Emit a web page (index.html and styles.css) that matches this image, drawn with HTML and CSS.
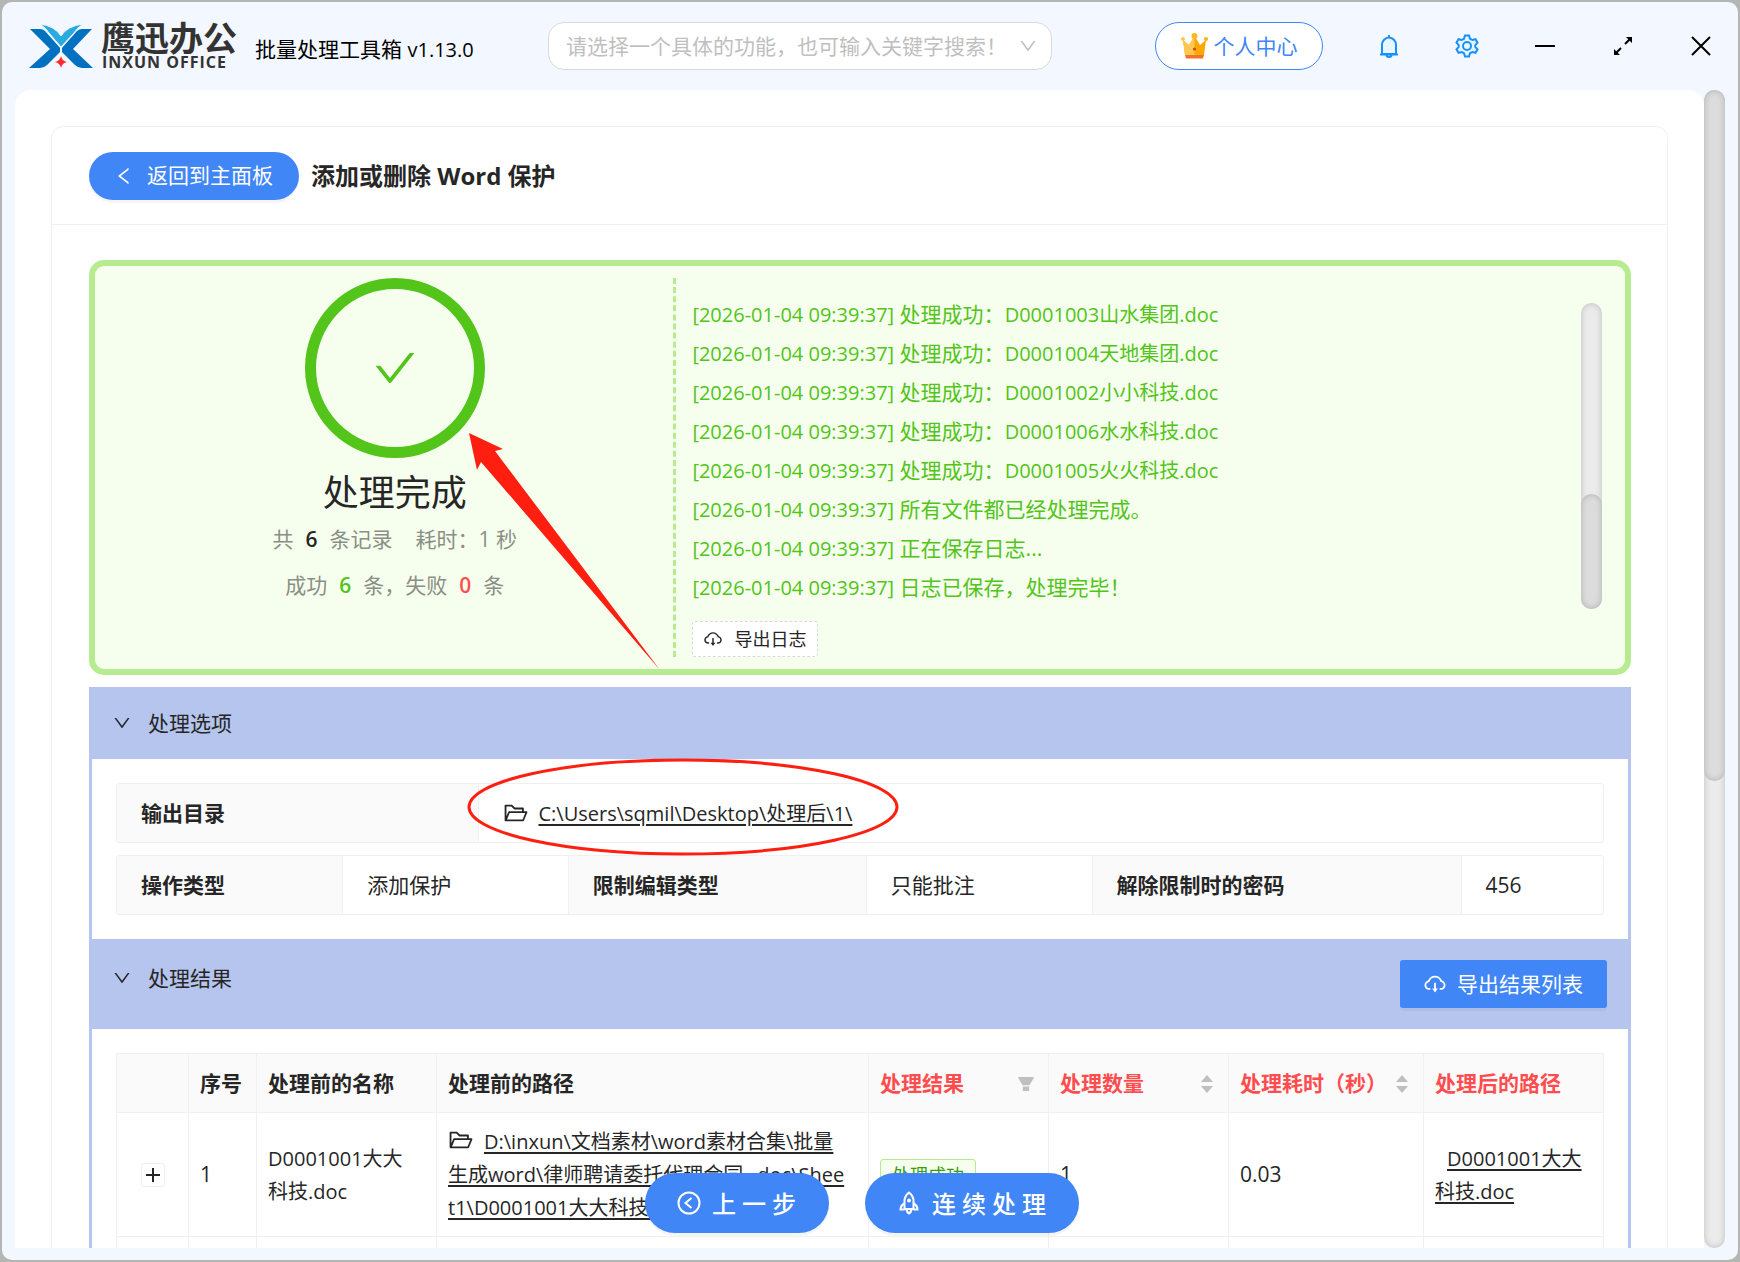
FILE: index.html
```html
<!DOCTYPE html>
<html lang="zh-CN">
<head>
<meta charset="utf-8">
<title>鹰迅办公 批量处理工具箱</title>
<link rel="stylesheet" href="styles.css">
</head>
<body>
<svg class="defs" aria-hidden="true">
  <symbol id="i-down" viewBox="0 0 1024 1024"><path d="M884 256h-75c-5.100 0-9.900 2.500-12.900 6.600L512 654.200 227.900 262.600c-3-4.100-7.800-6.600-12.900-6.600h-75c-6.500 0-10.300 7.400-6.500 12.700l352.600 486.100c12.800 17.600 39 17.600 51.700 0l352.600-486.100c3.900-5.300.1-12.700-6.400-12.700z"/></symbol>
  <symbol id="i-left" viewBox="0 0 1024 1024"><path d="M724 218.300V141c0-6.700-7.700-10.400-12.900-6.300L260.300 486.800a31.860 31.860 0 0 0 0 50.300l450.800 352.100c5.300 4.100 12.900.4 12.900-6.300v-77.300c0-4.900-2.300-9.600-6.100-12.600l-360-281 360-281.100c3.800-3 6.100-7.700 6.100-12.600z"/></symbol>
  <symbol id="i-check" viewBox="0 0 1024 1024"><path d="M912 190h-69.900c-9.800 0-19.100 4.500-25.100 12.200L404.700 724.500 207 474a32 32 0 0 0-25.100-12.200H112c-6.700 0-10.400 7.700-6.300 12.900l273.900 347c12.800 16.200 37.400 16.200 50.300 0l488.400-618.900c4.100-5.100.4-12.800-6.300-12.800z"/></symbol>
  <symbol id="i-cloud" viewBox="0 0 1024 1024"><path d="M624 706.300h-74.100V464c0-4.400-3.600-8-8-8h-60c-4.400 0-8 3.600-8 8v242.300H400c-6.700 0-10.400 7.700-6.300 12.900l112 141.700a8 8 0 0 0 12.600 0l112-141.700c4.100-5.200.4-12.900-6.300-12.900z"/><path d="M811.400 366.700C765.600 245.900 648.900 160 512.200 160S258.800 245.800 213 366.600C127.300 389.100 64 467.200 64 560c0 110.500 89.500 200 199.900 200H304c4.400 0 8-3.600 8-8v-60c0-4.400-3.600-8-8-8h-40.100c-33.700 0-65.400-13.400-89-37.700-23.500-24.200-36-56.800-34.900-90.600.9-26.400 9.900-51.200 26.200-72.100 16.700-21.300 40.100-36.800 66.100-43.700l37.900-9.900 13.900-36.600c8.600-22.800 20.600-44.100 35.700-63.400a245.600 245.600 0 0 1 52.400-49.900c41.100-28.900 89.500-44.200 140-44.200s98.900 15.300 140 44.200c19.900 14 37.500 30.800 52.400 49.900 15.100 19.300 27.100 40.700 35.700 63.400l13.800 36.500 37.800 10C846.100 454.500 884 503.800 884 560c0 33.100-12.900 64.300-36.300 87.700a123.070 123.070 0 0 1-87.600 36.300H720c-4.400 0-8 3.600-8 8v60c0 4.400 3.600 8 8 8h40.100C870.500 760 960 670.500 960 560c0-92.700-63.100-170.800-148.600-193.300z"/></symbol>
  <symbol id="i-folder" viewBox="0 0 1024 1024"><path d="M928 444H820V330.400c0-17.700-14.300-32-32-32H473L355.700 186.200a8.150 8.150 0 0 0-5.500-2.200H96c-17.700 0-32 14.300-32 32v592c0 17.700 14.300 32 32 32h698c13 0 24.800-7.900 29.700-20l134-332c1.500-3.800 2.300-7.900 2.300-12 0-17.700-14.300-32-32-32zM136 256h188.500l119.600 114.400H748V444H238c-13 0-24.800 7.900-29.700 20L136 643.200V256zm635.300 512H159l103.300-256h612.400L771.300 768z"/></symbol>
  <symbol id="i-filter" viewBox="0 0 1024 1024"><path d="M349 838c0 17.700 14.200 32 31.800 32h262.400c17.600 0 31.800-14.300 31.800-32V642H349v196zm531.100-684H143.900c-24.500 0-39.800 26.700-27.500 48l221.300 376h348.800l221.300-376c12.100-21.300-3.200-48-27.700-48z"/></symbol>
  <symbol id="i-sort" viewBox="0 0 12 18"><path d="M6 0l6 7H0zM0 11h12l-6 7z"/></symbol>
</svg>

<div class="window">
  <header class="titlebar">
    <div class="brand">
      <svg class="brand-mark" viewBox="0 0 64 45" aria-hidden="true">
        <path fill="#0070c0" d="M1 5h10q3 0 5 2l16 18 16-18q2-2 5-2h10L44 25l20 19H53q-4 0-7-3L32 27 18 41q-3 3-7 3H0l21-19z"/>
        <path fill="#f3f7ff" d="M31 24h2v4h-2z"/>
        <path fill="#29abe2" stroke="#f3f7ff" stroke-width="1" d="M11 0q15 2 21 12Q38 2 54 0q-6 4-9 9L32 23 20 9Q17 4 11 0z"/>
        <path fill="#ff2a2a" d="M32 32q1 5 6 6-5 1-6 6-1-5-6-6 5-1 6-6z"/>
      </svg>
      <div class="brand-name"><span class="brand-cn">鹰迅办公</span><span class="brand-en">INXUN OFFICE</span></div>
      <span class="app-title">批量处理工具箱 <span class="version">v1.13.0</span></span>
    </div>
    <div class="search">
      <select aria-label="搜索功能">
        <option>请选择一个具体的功能，也可输入关键字搜索！</option>
      </select>
      <svg class="search-arrow"><use href="#i-down"/></svg>
    </div>
    <div class="actions">
      <button class="user-btn">
        <svg class="crown" viewBox="0 0 27 26" aria-hidden="true">
          <path fill="#ffa800" d="M2 7l6 5 5.500-9 5.500 9 6-5-2 15H4z"/>
          <path fill="#ffc850" d="M2 7l6 5 5.500-9v19H4z"/>
          <circle cx="2" cy="6" r="2" fill="#ffc850"/><circle cx="25" cy="6" r="2" fill="#ffb000"/><circle cx="13.500" cy="3" r="3" fill="#ffb820"/>
          <path fill="#f4702c" d="M4 22h19l-1 3.500H5z"/><circle cx="13.500" cy="16" r="1.600" fill="#d0461c"/>
        </svg>个人中心</button>
      <div class="win-controls">
        <button aria-label="通知"><svg viewBox="0 0 24 24" class="duo"><path d="M5 20V11a7 7.500 0 0 1 14 0v9z"/><path d="M12 1v2M3 20.500h18M9.500 21a2.500 2 0 0 0 5 0"/></svg></button>
        <button aria-label="设置"><svg viewBox="0 0 24 24" class="duo"><path d="M10 1.500h4l1 3.200 2.300 1.300 3.200-.8 2 3.500-2.200 2.400v1.800l2.200 2.400-2 3.500-3.200-.8-2.300 1.300-1 3.200h-4l-1-3.200L6.700 18l-3.200.8-2-3.500 2.200-2.400v-1.800L1.500 8.700l2-3.500 3.200.8L9 4.700z"/><circle cx="12" cy="12" r="4"/></svg></button>
        <button aria-label="最小化"><svg viewBox="0 0 24 24" class="mono"><path d="M2 12h20"/></svg></button>
        <button aria-label="最大化"><svg viewBox="0 0 24 24" class="mono"><path d="M14 10l5-5M10 14l-5 5"/><path class="solid" d="M15 3h6v6zM3 15v6h6z"/></svg></button>
        <button aria-label="关闭"><svg viewBox="0 0 24 24" class="mono"><path d="M3 3l18 18M21 3L3 21"/></svg></button>
      </div>
    </div>
  </header>

  <div class="workspace">
    <main class="panel">
      <section class="card">
        <header class="card-head">
          <button class="pill back"><svg><use href="#i-left"/></svg>返回到主面板</button>
          <h1>添加或删除 Word 保护</h1>
        </header>
        <div class="card-body">
          <section class="result">
            <div class="summary">
              <div class="ring"><svg><use href="#i-check"/></svg></div>
              <h2>处理完成</h2>
              <p>共<b>6</b>条记录<span class="elapsed">耗时：1 秒</span></p>
              <p>成功<b class="ok">6</b>条，失败<b class="bad">0</b>条</p>
            </div>
            <div class="log-col">
              <div class="log-box">
                <ul class="log">
                  <li><time>[2026-01-04 09:39:37]</time> 处理成功：<span>D0001003山水集团.doc</span></li>
                  <li><time>[2026-01-04 09:39:37]</time> 处理成功：<span>D0001004天地集团.doc</span></li>
                  <li><time>[2026-01-04 09:39:37]</time> 处理成功：<span>D0001002小小科技.doc</span></li>
                  <li><time>[2026-01-04 09:39:37]</time> 处理成功：<span>D0001006水水科技.doc</span></li>
                  <li><time>[2026-01-04 09:39:37]</time> 处理成功：<span>D0001005火火科技.doc</span></li>
                  <li><time>[2026-01-04 09:39:37]</time> 所有文件都已经处理完成。</li>
                  <li><time>[2026-01-04 09:39:37]</time> 正在保存日志...</li>
                  <li><time>[2026-01-04 09:39:37]</time> 日志已保存，处理完毕！</li>
                </ul>
                <div class="track log-track"><div class="thumb"></div></div>
              </div>
              <button class="export-log"><svg><use href="#i-cloud"/></svg>导出日志</button>
            </div>
            <svg class="arrow" viewBox="0 0 191 237" aria-hidden="true"><path d="M0 0l34 16-8 2 165 219L12 29l-4 8z"/></svg>
          </section>

          <div class="collapse">
            <div class="collapse-head">
              <button class="toggle"><svg><use href="#i-down"/></svg>处理选项</button>
            </div>
            <div class="collapse-body options">
              <div class="frame">
                <table class="desc output">
                  <tr><th scope="row">输出目录</th><td><div class="path"><svg class="folder"><use href="#i-folder"/></svg><a href="#">C:\Users\sqmil\Desktop\处理后\1\</a><svg class="ellipse" viewBox="0 0 432 98" aria-hidden="true"><ellipse cx="216" cy="49" rx="214" ry="47"/></svg></div></td></tr>
                </table>
              </div>
              <div class="frame">
                <table class="desc params">
                  <tr><th scope="row">操作类型</th><td>添加保护</td><th scope="row" class="w20">限制编辑类型</th><td>只能批注</td><th scope="row" class="w25">解除限制时的密码</th><td class="last">456</td></tr>
                </table>
              </div>
            </div>
            <div class="collapse-head tall">
              <button class="toggle"><svg><use href="#i-down"/></svg>处理结果</button>
              <button class="export-list"><svg><use href="#i-cloud"/></svg>导出结果列表</button>
            </div>
            <div class="collapse-body">
              <table class="grid">
                <colgroup><col class="c1"><col class="c2"><col class="c3"><col><col class="c3"><col class="c3"><col class="c4"><col class="c3"></colgroup>
                <thead>
                  <tr>
                    <th></th><th>序号</th><th>处理前的名称</th><th>处理前的路径</th>
                    <th class="red"><div class="th">处理结果<svg class="filter"><use href="#i-filter"/></svg></div></th>
                    <th class="red"><div class="th">处理数量<svg class="sort"><use href="#i-sort"/></svg></div></th>
                    <th class="red"><div class="th">处理耗时（秒）<svg class="sort"><use href="#i-sort"/></svg></div></th>
                    <th class="red">处理后的路径</th>
                  </tr>
                </thead>
                <tbody>
                  <tr>
                    <td class="center"><button class="expand" aria-label="展开行"></button></td>
                    <td>1</td>
                    <td class="file">D0001001大大科技.doc</td>
                    <td class="file"><svg class="folder"><use href="#i-folder"/></svg><a href="#">D:\inxun\文档素材\word素材合集\批量生成word\律师聘请委托代理合同_.doc\Sheet1\D0001001大大科技.doc</a></td>
                    <td><span class="tag">处理成功</span></td>
                    <td>1</td>
                    <td>0.03</td>
                    <td class="file out"><a href="#">D0001001大大科技.doc</a></td>
                  </tr>
                  <tr><td class="center"></td><td></td><td></td><td></td><td></td><td></td><td></td><td></td></tr>
                </tbody>
              </table>
            </div>
          </div>
        </div>
      </section>
    </main>
    <div class="track page-track"><div class="thumb"></div></div>
  </div>

  <div class="float-bar">
    <button class="pill"><svg viewBox="0 0 24 24" class="line"><circle cx="12" cy="12" r="10.500"/><path d="M14.500 7l-6 5 6 5"/></svg>上一步</button>
    <button class="pill"><svg viewBox="0 0 24 24" class="line"><path d="M7.500 18V8.500Q8.500 4 12 1.500 15.500 4 16.500 8.500V18z"/><path d="M7.500 12.500Q3.500 14.500 3.500 18.500h4M16.500 12.500q4 2 4 6h-4M9.500 18.500q.5 3 2.500 4 2-1 2.500-4"/><circle cx="12" cy="9.500" r="1"/></svg>连续处理</button>
  </div>
</div>
</body>
</html>
```

FILE: styles.css
```css
* { box-sizing: border-box; }

html, body { height: 100%; }

body {
  margin: 0;
  padding: 2px;
  background: #b4b6b4;
  color: #262626;
  font: 21px/33px "Open Sans", "Noto Sans CJK SC", sans-serif;
  overflow: hidden;
}

h1, h2, p, ul { margin: 0; padding: 0; }
button, select { font: inherit; color: inherit; padding: 0; border: 0; background: none; }
svg { fill: currentColor; flex: none; }
a { color: inherit; font-size: 20px; text-decoration: underline; text-decoration-thickness: 2px; text-underline-offset: 3px; }
.defs { display: none; }

.window {
  position: relative;
  display: flex;
  flex-direction: column;
  height: 100%;
  background: #f3f7ff;
  border-radius: 10px;
  overflow: hidden;
}

/* title bar */
.titlebar { display: flex; align-items: center; flex: none; height: 88px; padding-left: 27px; }
.brand { display: flex; align-items: center; flex: 0 0 519px; }
.brand-mark { width: 64px; height: 45px; }
.brand-name { display: flex; flex-direction: column; width: 137px; margin-left: 8px; padding-bottom: 2px; color: #333; white-space: nowrap; }
.brand-cn { font-size: 34px; line-height: 34px; font-weight: 700; }
.brand-en { font-size: 16px; line-height: 14px; font-weight: 700; letter-spacing: 1px; padding-left: 1px; }
.app-title { margin-left: 17px; padding-top: 6px; color: #000; white-space: nowrap; }
.version { font-size: 20px; }

.search { position: relative; flex: 0 0 504px; }
.search select {
  appearance: none;
  display: block;
  width: 100%;
  height: 48px;
  padding: 0 50px 0 17px;
  border: 1px solid #d9d9d9;
  border-radius: 16px;
  background: #fff;
  color: #bfbfbf;
}
.search-arrow { position: absolute; right: 14px; top: 14px; width: 20px; height: 20px; color: #bfbfbf; }

.actions { display: flex; align-items: center; justify-content: flex-end; gap: 27px; flex: 1; margin-right: -2px; }
.user-btn {
  display: flex;
  align-items: center;
  justify-content: center;
  gap: 6px;
  width: 168px;
  height: 48px;
  border: 1px solid #4086f7;
  border-radius: 24px;
  background: #fff;
  color: #4086f7;
}
.crown { width: 27px; height: 26px; }
.win-controls { display: grid; grid-template-columns: repeat(5, 78px); }
.win-controls button { display: flex; justify-content: center; align-items: center; height: 48px; }
.win-controls svg { width: 24px; height: 24px; }
.duo { fill: #e6f7ff; stroke: #1890ff; stroke-width: 2; }
.mono { fill: none; stroke: #000; stroke-width: 2; }
.mono .solid { fill: #000; stroke: none; }

/* scrolling area */
.workspace { display: flex; flex: 1; min-height: 0; padding: 0 13px 12px; }
.panel { flex: 1; min-width: 0; padding: 36px 36px 0; background: #fff; border-radius: 16px 16px 0 0; overflow: hidden; }
.track { width: 21px; border-radius: 11px; background: #ebebeb; box-shadow: inset 0 0 6px rgba(0, 0, 0, .2); }
.thumb { border-radius: 11px; background: #dcdcdc; box-shadow: inset 0 0 6px rgba(0, 0, 0, .2); }
.page-track .thumb { height: 59.7%; }

.card { border: 1px solid #f0f0f0; border-radius: 12px; }
.card-head { display: flex; align-items: center; gap: 12px; height: 98px; padding: 0 36px 0 37px; border-bottom: 1px solid #f0f0f0; }
.card-head h1 { font-size: 24px; line-height: 36px; font-weight: 700; }
.card-body { padding: 35px 36px 36px 37px; }

.pill {
  display: flex;
  align-items: center;
  justify-content: center;
  color: #fff;
  background: #4086f7;
  box-shadow: 0 3px 0 rgba(0, 0, 0, .04);
}
.back { width: 210px; height: 48px; padding-right: 2px; border-radius: 24px; gap: 12px; }
.back svg { width: 22px; height: 22px; }

/* outcome box */
.result {
  position: relative;
  display: grid;
  grid-template-columns: 38fr 62fr;
  padding: 12px 0;
  border: 6px solid #b7eb8f;
  border-radius: 15px;
  background: #f6ffed;
}
.summary {
  display: flex;
  flex-direction: column;
  align-items: center;
  padding-left: 21px;
  border-right: 3px dashed #b7eb8f;
  color: #8a8f86;
}
.ring {
  display: flex;
  align-items: center;
  justify-content: center;
  width: 180px;
  height: 180px;
  border: 11px solid #52c41a;
  border-radius: 50%;
  color: #52c41a;
}
.ring svg { width: 48px; height: 48px; }
.summary h2 { margin: 11px 0 6px; font-size: 36px; line-height: 48px; font-weight: 400; color: #262626; }
.summary p + p { margin-top: 13px; }
.summary b { margin: 0 12px; font-weight: 600; color: #262626; }
.summary .ok { color: #52c41a; }
.summary .bad { color: #ff4d4f; }
.elapsed { margin-left: 23px; }

.log-col { padding: 25px 23px 0 16px; }
.log-box { display: flex; height: 306px; }
.log { display: flex; flex-direction: column; justify-content: flex-end; flex: 1; padding-bottom: 2px; list-style: none; color: #52c41a; line-height: 39px; }
.log time, .log span { font-size: 20px; }
.log-track { display: flex; flex-direction: column; justify-content: flex-end; }
.log-track .thumb { height: 115px; }
.export-log {
  display: flex;
  align-items: center;
  gap: 11px;
  height: 36px;
  margin-top: 12px;
  padding: 0 11px 0 10px;
  border: 1px dashed #d9d9d9;
  border-radius: 3px;
  background: #fff;
  font-size: 18px;
}
.export-log svg { width: 20px; height: 20px; }
.arrow { position: absolute; left: 374px; top: 167px; width: 191px; height: 237px; fill: #ff1f10; }

/* collapse */
.collapse { margin-top: 12px; }
.collapse-head { display: flex; align-items: flex-start; justify-content: space-between; padding: 18px 24px 18px 23px; background: #b5c5ed; }
.collapse-head.tall { padding-top: 21px; padding-bottom: 21px; }
.toggle { display: flex; align-items: center; gap: 16px; line-height: 36px; }
.toggle svg { width: 20px; height: 20px; }
.export-list {
  display: flex;
  align-items: center;
  gap: 10px;
  height: 48px;
  padding: 0 24px 0 23px;
  border-radius: 3px;
  background: #4086f7;
  color: #fff;
  box-shadow: 0 3px 0 rgba(0, 0, 0, .04);
}
.export-list svg { width: 24px; height: 24px; }
.collapse-body { padding: 24px; border: 3px solid #b5c5ed; border-width: 0 3px; }
.options { display: flex; flex-direction: column; gap: 12px; }

.frame { border: 1px solid #f0f0f0; border-radius: 3px; }
.desc { width: 100%; border-collapse: collapse; table-layout: fixed; }
.desc th, .desc td { height: 58px; padding: 0 24px; text-align: left; }
.desc th { background: #fafafa; font-weight: 700; }
.desc th + td, .desc td + th { border-left: 1px solid #f0f0f0; }
.output th { width: 361px; }
.w20 { width: 298px; }
.w25 { width: 369px; }
.last { width: 142px; }
.path { position: relative; display: flex; align-items: center; gap: 10px; }
.folder { width: 26px; height: 26px; }
.ellipse { position: absolute; left: -36px; top: -39px; width: 432px; height: 98px; fill: none; stroke: #ff1f10; stroke-width: 3; }

/* result rows */
.grid { width: 100%; border-collapse: collapse; table-layout: fixed; }
.grid th, .grid td { padding: 12px 12px 12px 11px; border: 1px solid #f0f0f0; text-align: left; word-break: break-all; }
.grid th { padding-top: 13px; background: #fafafa; font-weight: 700; }
.grid th.red { color: #ff4d4f; }
.grid td.file { padding-right: 20px; font-size: 20px; }
.grid .folder { margin-right: 10px; vertical-align: -4px; }
.grid td.center { height: 57px; padding-left: 12px; text-align: center; }
.c1 { width: 72px; }
.c2 { width: 68px; }
.c3 { width: 180px; }
.c4 { width: 195px; }
.th { display: flex; align-items: center; justify-content: space-between; white-space: nowrap; }
.filter { width: 20px; height: 20px; color: #bfbfbf; }
.sort { width: 12px; height: 18px; margin-right: 3px; color: #bfbfbf; }
.expand {
  display: block;
  width: 24px;
  height: 24px;
  margin: 0 auto;
  border: 1px solid #f0f0f0;
  border-radius: 3px;
  background:
    linear-gradient(#262626, #262626) center / 14px 2px no-repeat,
    linear-gradient(#262626, #262626) center / 2px 14px no-repeat,
    #fff;
}
.tag { display: inline-block; padding: 0 11px; border: 1px solid #b7eb8f; border-radius: 3px; background: #f6ffed; color: #389e0d; font-size: 18px; line-height: 31px; }
.grid td.out { padding-right: 12px; text-indent: 12px; }

/* floating actions */
.float-bar { position: absolute; left: 0; right: 16px; bottom: 27px; display: flex; justify-content: center; gap: 36px; }
.float-bar .pill { height: 60px; padding: 0 27px 0 32px; border-radius: 30px; gap: 11px; font-size: 24px; font-weight: 500; letter-spacing: 6px; }
.line { width: 24px; height: 24px; fill: none; stroke: currentColor; stroke-width: 2; }
```
